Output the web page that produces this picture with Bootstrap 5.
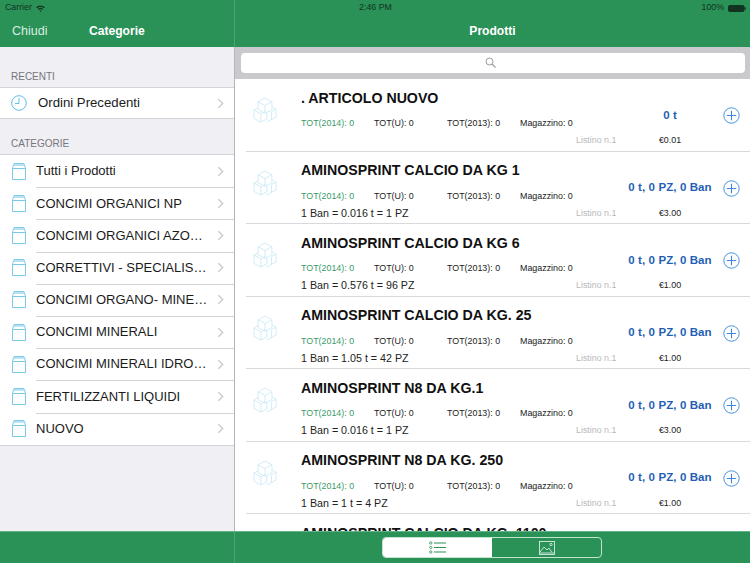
<!DOCTYPE html>
<html lang="it">
<head>
    <meta charset="utf-8">
    <title>Prodotti</title>
    <link href="https://cdn.jsdelivr.net/npm/bootstrap@5.3.0/dist/css/bootstrap.min.css" rel="stylesheet">
    <style>
        html, body { height: 100%; overflow: hidden; }
        body { font-family: "Liberation Sans", Arial, sans-serif; background: #fff; color: #111; }
        .app-shell { width: 750px; height: 563px; display: grid; grid-template-rows: 47px 1fr 32px; overflow: hidden; }
        .top-bar { background: #2a9157; color: #fff; }
        .status-line { height: 16px; padding: 0 4px 0 5px; font-size: 8.8px; color: #12331f; display: grid; grid-template-columns: 1fr auto 1fr; align-items: center; }
        .nav-line { height: 31px; display: grid; grid-template-columns: 235px 1fr; }
        .nav-left { font-size: 12.5px; padding-left: 12px; position: relative; }
        .nav-left::after { content: ""; position: absolute; right: 0; top: -16px; bottom: 0; border-right: 1px solid #4da377; }
        .nav-left .back-link { color: #d9eee1; width: 77px; }
        .nav-title { font-size: 12.1px; font-weight: 700; }
        .work-area { display: grid; grid-template-columns: 235px 1fr; min-height: 0; }
        .side-panel { background: #efeff4; border-right: 1px solid #b5b5b8; }
        .group-label { font-size: 10px; color: #76767a; height: 35px; padding: 0 11px 3px; display: flex; align-items: flex-end; }
        .group-label.first { height: 40px; }
        .side-list { background: #fff; border-top: 1px solid #d4d4d8; border-bottom: 1px solid #d4d4d8; }
        .side-row { height: 32.2px; padding: 0 10px 0 11px; font-size: 13px; color: #1b1b1b; position: relative; }
        .side-row + .side-row::before { content: ""; position: absolute; left: 36px; right: 0; top: 0; border-top: 1px solid #d4d4d8; }
        .side-row .row-name { flex: 1; min-width: 0; margin-left: 9px; white-space: nowrap; }
        .side-row.recent { height: 30px; font-size: 13.2px; }
        .side-row.recent .row-name { margin-left: 11px; }
        .main-panel { min-width: 0; overflow: hidden; }
        .search-strip { height: 32px; background: #c9c9ce; padding: 6px 5px 6px 6px; }
        .search-field { height: 20px; background: #fff; border-radius: 4px; padding: 0 6px 2px 0; }
        .product-row { height: 72.5px; margin-left: 11px; border-bottom: 1px solid #d9d9dc; display: grid; grid-template-columns: 55px 275px 1fr; }
        .product-thumb { padding: 18px 0 0 7px; }
        .product-name { font-size: 14.2px; font-weight: 700; line-height: 16px; margin-top: 10.5px; height: 16px; white-space: nowrap; color: #111; }
        .stat-line { margin-top: 10.5px; height: 16px; font-size: 8.9px; display: grid; grid-template-columns: 73px 73px 73px 1fr; align-items: center; color: #222; }
        .stat-green { color: #3c9a67; }
        .convert-line { height: 17px; font-size: 10.7px; line-height: 17px; color: #222; }
        .order-col { padding-top: 26px; }
        .qty-line { height: 21px; display: grid; grid-template-columns: 44px 100px 20px; align-items: center; }
        .qty-text { grid-column: 2; text-align: center; font-size: 11.5px; font-weight: 700; color: #1f5fb5; white-space: nowrap; letter-spacing: .1px; }
        .plus-icon { grid-column: 3; justify-self: end; display: block; }
        .price-line { margin-top: 8px; height: 14px; display: grid; grid-template-columns: 44px 100px; font-size: 8.9px; align-items: center; }
        .listino { color: #b9b9bc; white-space: nowrap; }
        .price { text-align: center; color: #222; }
        .bottom-bar { background: #2a9157; border-top: 1px solid #5fb386; display: grid; grid-template-columns: 235px 1fr; }
        .bottom-left { border-right: 1px solid #4da377; }
        .segment-wrap { padding: 5px 0 0 147px; }
        .segment-box { width: 220px; height: 21px; border: 1px solid #c4e3d1; border-radius: 4px; display: grid; grid-template-columns: 1fr 1fr; overflow: hidden; }
        .segment-on { background: #fff; }
    </style>
</head>
<body>
    <svg width="0" height="0" class="position-absolute">
        <defs>
            <symbol id="box-ico" viewBox="0 0 16 17">
                <path d="M1.5 5.5h13v11h-13zM1.5 5.5l1-3.5h11l1 3.5M2.8 2l.4-1.5h9.6l.4 1.5" fill="none" stroke="#6cc3e6" stroke-width=".9"/>
            </symbol>
            <symbol id="chev-ico" viewBox="0 0 8 12">
                <path d="M1.5 1l5 5-5 5" fill="none" stroke="#c4c4c9" stroke-width="1.4"/>
            </symbol>
            <symbol id="cubes-ico" viewBox="0 0 26 30">
                <g fill="none" stroke="#c9e9f5" stroke-width=".9">
                    <path d="M13 1l7.500 4v8.500l-7.500 4-7.500-4V5zM5.500 5l7.500 4 7.500-4M13 9v8.500"/>
                    <path d="M5.500 11.500L1 14v9l7.500 4 6.500-3.500V17M1 14l7.500 4 5-2.700M8.500 18v9"/>
                    <path d="M20.500 10.500l4.500 2.500v8.500l-10 5.500"/>
                    <path d="M25 13l-5 2.700V24"/>
                </g>
            </symbol>
            <symbol id="plus-ico" viewBox="0 0 17 17">
                <circle cx="8.500" cy="8.500" r="7.700" fill="none" stroke="#4a90dc" stroke-width="1"/>
                <path d="M8.500 3.800v9.400M3.800 8.500h9.400" stroke="#3f86d8" stroke-width="1.100"/>
            </symbol>
        </defs>
    </svg>

    <div class="app-shell">
        <header class="top-bar">
            <div class="status-line">
                <div class="d-flex align-items-center gap-1">
                    <span>Carrier</span>
                    <svg width="9" height="7" viewBox="0 0 10 8"><path d="M0 2.600a7 7 0 0 1 10 0L9 3.800a5.500 5.500 0 0 0-8 0zM2 4.600a4.200 4.200 0 0 1 6 0L7 5.700a2.800 2.800 0 0 0-4 0zM3.900 6.600a1.600 1.600 0 0 1 2.200 0L5 8z" fill="#12331f"/></svg>
                </div>
                <div>2:46 PM</div>
                <div class="d-flex align-items-center justify-content-end gap-1">
                    <span>100%</span>
                    <svg width="18" height="7" viewBox="0 0 18 7"><rect x=".5" y=".5" width="15.500" height="6" rx="1.200" fill="#12331f" stroke="#12331f"/><rect x="16.500" y="2.200" width="1.200" height="2.600" fill="#12331f"/></svg>
                </div>
            </div>
            <div class="nav-line">
                <div class="nav-left d-flex align-items-center">
                    <span class="back-link">Chiudi</span>
                    <span class="nav-title">Categorie</span>
                </div>
                <div class="nav-title d-flex align-items-center justify-content-center">Prodotti</div>
            </div>
        </header>

        <div class="work-area">
            <aside class="side-panel" id="sidePanel"></aside>
            <main class="main-panel">
                <div class="search-strip">
                    <div class="search-field d-flex align-items-center justify-content-center">
                        <svg width="11" height="11" viewBox="0 0 11 11"><circle cx="4.500" cy="4.500" r="3.500" fill="none" stroke="#9a9a9e"/><path d="M7 7l3.500 3.500" stroke="#9a9a9e" stroke-width="1.100"/></svg>
                    </div>
                </div>
                <div id="productList"></div>
            </main>
        </div>

        <footer class="bottom-bar">
            <div class="bottom-left"></div>
            <div class="segment-wrap">
                <div class="segment-box">
                    <div class="segment-on d-flex align-items-center justify-content-center">
                        <svg width="17" height="13" viewBox="0 0 17 13"><g fill="none" stroke="#2a9157" stroke-width=".8"><circle cx="1.800" cy="2" r="1.200"/><circle cx="1.800" cy="6.500" r="1.200"/><circle cx="1.800" cy="11" r="1.200"/></g><path d="M5 2h12M5 6.500h12M5 11h12" stroke="#2a9157" stroke-width="1.200"/></svg>
                    </div>
                    <div class="d-flex align-items-center justify-content-center">
                        <svg width="16" height="14" viewBox="0 0 16 14"><g fill="none" stroke="#d4ecdf" stroke-width=".9"><rect x=".5" y=".5" width="15" height="13"/><path d="M1 11l4-5 3 3 2-2 3 4.500M1 12h14"/><circle cx="12" cy="3.500" r="1.200"/></g></svg>
                    </div>
                </div>
            </div>
        </footer>
    </div>

    <script src="https://cdn.jsdelivr.net/npm/bootstrap@5.3.0/dist/js/bootstrap.bundle.min.js"></script>
    <script>
        const categories = [
            'Tutti i Prodotti', 'CONCIMI ORGANICI NP', 'CONCIMI ORGANICI AZO…',
            'CORRETTIVI - SPECIALIS…', 'CONCIMI ORGANO- MINE…', 'CONCIMI MINERALI',
            'CONCIMI MINERALI IDRO…', 'FERTILIZZANTI LIQUIDI', 'NUOVO'
        ];

        const products = [
            { name: '. ARTICOLO NUOVO', qty: '0 t', conv: '', price: '€0.01' },
            { name: 'AMINOSPRINT CALCIO DA KG 1', qty: '0 t, 0 PZ, 0 Ban', conv: '1 Ban = 0.016 t = 1 PZ', price: '€3.00' },
            { name: 'AMINOSPRINT CALCIO DA KG 6', qty: '0 t, 0 PZ, 0 Ban', conv: '1 Ban = 0.576 t = 96 PZ', price: '€1.00' },
            { name: 'AMINOSPRINT CALCIO DA KG. 25', qty: '0 t, 0 PZ, 0 Ban', conv: '1 Ban = 1.05 t = 42 PZ', price: '€1.00' },
            { name: 'AMINOSPRINT N8 DA KG.1', qty: '0 t, 0 PZ, 0 Ban', conv: '1 Ban = 0.016 t = 1 PZ', price: '€3.00' },
            { name: 'AMINOSPRINT N8 DA KG. 250', qty: '0 t, 0 PZ, 0 Ban', conv: '1 Ban = 1 t = 4 PZ', price: '€1.00' }
        ];

        const chevron = '<svg width="7" height="11"><use href="#chev-ico"/></svg>';

        document.getElementById('sidePanel').innerHTML = `
            <div class="group-label first">RECENTI</div>
            <div class="side-list">
                <div class="side-row recent d-flex align-items-center">
                    <svg width="16" height="16" viewBox="0 0 16 16"><circle cx="8" cy="8" r="7.300" fill="none" stroke="#5fbde4"/><path d="M8 3v5.500H4" fill="none" stroke="#5fbde4"/></svg>
                    <span class="row-name">Ordini Precedenti</span>${chevron}
                </div>
            </div>
            <div class="group-label">CATEGORIE</div>
            <div class="side-list">
                ${categories.map(c => `
                <div class="side-row d-flex align-items-center">
                    <svg width="16" height="17"><use href="#box-ico"/></svg>
                    <span class="row-name">${c}</span>${chevron}
                </div>`).join('')}
            </div>`;

        // last row is only peeking out above the bottom bar, so just its title
        document.getElementById('productList').innerHTML = products.map(p => `
            <div class="product-row">
                <div class="product-thumb"><svg width="24" height="28"><use href="#cubes-ico"/></svg></div>
                <div>
                    <div class="product-name">${p.name}</div>
                    <div class="stat-line">
                        <span class="stat-green">TOT(2014): 0</span>
                        <span>TOT(U): 0</span>
                        <span>TOT(2013): 0</span>
                        <span>Magazzino: 0</span>
                    </div>
                    <div class="convert-line">${p.conv}</div>
                </div>
                <div class="order-col">
                    <div class="qty-line">
                        <span class="qty-text">${p.qty}</span>
                        <svg class="plus-icon" width="17" height="17"><use href="#plus-ico"/></svg>
                    </div>
                    <div class="price-line">
                        <span class="listino">Listino n.1</span>
                        <span class="price">${p.price}</span>
                    </div>
                </div>
            </div>`).join('') + `
            <div class="product-row">
                <div></div>
                <div class="product-name">AMINOSPRINT CALCIO DA KG. 1100</div>
            </div>`;
    </script>
</body>
</html>
